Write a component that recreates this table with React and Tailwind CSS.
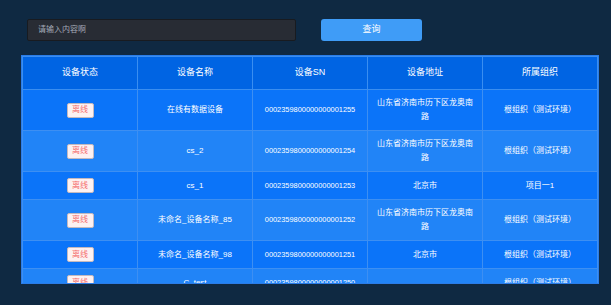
import React from "react";

const rows = [
  { name: "在线有数据设备", sn: "0002359800000000001255", addr: "山东省济南市历下区龙奥南路", org: "根组织（测试环境）" },
  { name: "cs_2", sn: "0002359800000000001254", addr: "山东省济南市历下区龙奥南路", org: "根组织（测试环境）" },
  { name: "cs_1", sn: "0002359800000000001253", addr: "北京市", org: "项目一1" },
  { name: "未命名_设备名称_85", sn: "0002359800000000001252", addr: "山东省济南市历下区龙奥南路", org: "根组织（测试环境）" },
  { name: "未命名_设备名称_98", sn: "0002359800000000001251", addr: "北京市", org: "根组织（测试环境）" },
  { name: "C_test", sn: "0002359800000000001250", addr: "- -", org: "根组织（测试环境）" },
];

const headers = ["设备状态", "设备名称", "设备SN", "设备地址", "所属组织"];

const cell = "border border-[#3d8ff2] py-[6px] px-[8px] leading-[14px] align-middle";

export default function App() {
  return (
    <div
      className="w-[611px] h-[305px] bg-[#0f2942] overflow-hidden pt-[19px]"
      style={{ fontFamily: '"Liberation Sans", "Noto Sans CJK SC", sans-serif' }}
    >
      <div className="flex items-center ml-[27px] gap-[25px]">
        <div className="w-[269px] h-[22px] bg-[#282c34] border border-[#181b20] rounded-[2px] flex items-center pl-[10px] text-[8px] text-[#a3aab6]">
          请输入内容啊
        </div>
        <button className="w-[101px] h-[22px] bg-[#3f9cf7] rounded-[3px] text-white text-[9px] flex items-center justify-center">
          查询
        </button>
      </div>
      <div className="mt-[14px] ml-[21px] w-[578px] h-[229px] overflow-hidden border border-[#2a7ce8] bg-[#2184f7]">
        <table className="w-full table-fixed border-collapse text-center">
          <thead>
            <tr className="bg-[#0064e3] h-[33px]">
              {headers.map((h) => (
                <th key={h} className="font-normal text-white text-[9px] border border-[#3a8ef0] px-[8px]">
                  {h}
                </th>
              ))}
            </tr>
          </thead>
          <tbody>
            {rows.map((r, i) => (
              <tr key={r.sn} className={i % 2 === 0 ? "bg-[#0b74f9]" : "bg-[#2184f7]"}>
                <td className={cell}>
                  <div className="mx-auto flex items-center justify-center w-[27px] h-[15px] bg-[#fdf1f1] border border-[#c4b9bf] rounded-[2px] text-[#f56c6c] text-[8px] leading-none">
                    离线
                  </div>
                </td>
                <td className={`${cell} text-[8px] text-white`}>{r.name}</td>
                <td className={`${cell} text-[7.4px] text-white`}>{r.sn}</td>
                <td className={`${cell} text-[8px] text-white`}>{r.addr}</td>
                <td className={`${cell} text-[8px] text-white`}>{r.org}</td>
              </tr>
            ))}
          </tbody>
        </table>
      </div>
    </div>
  );
}
